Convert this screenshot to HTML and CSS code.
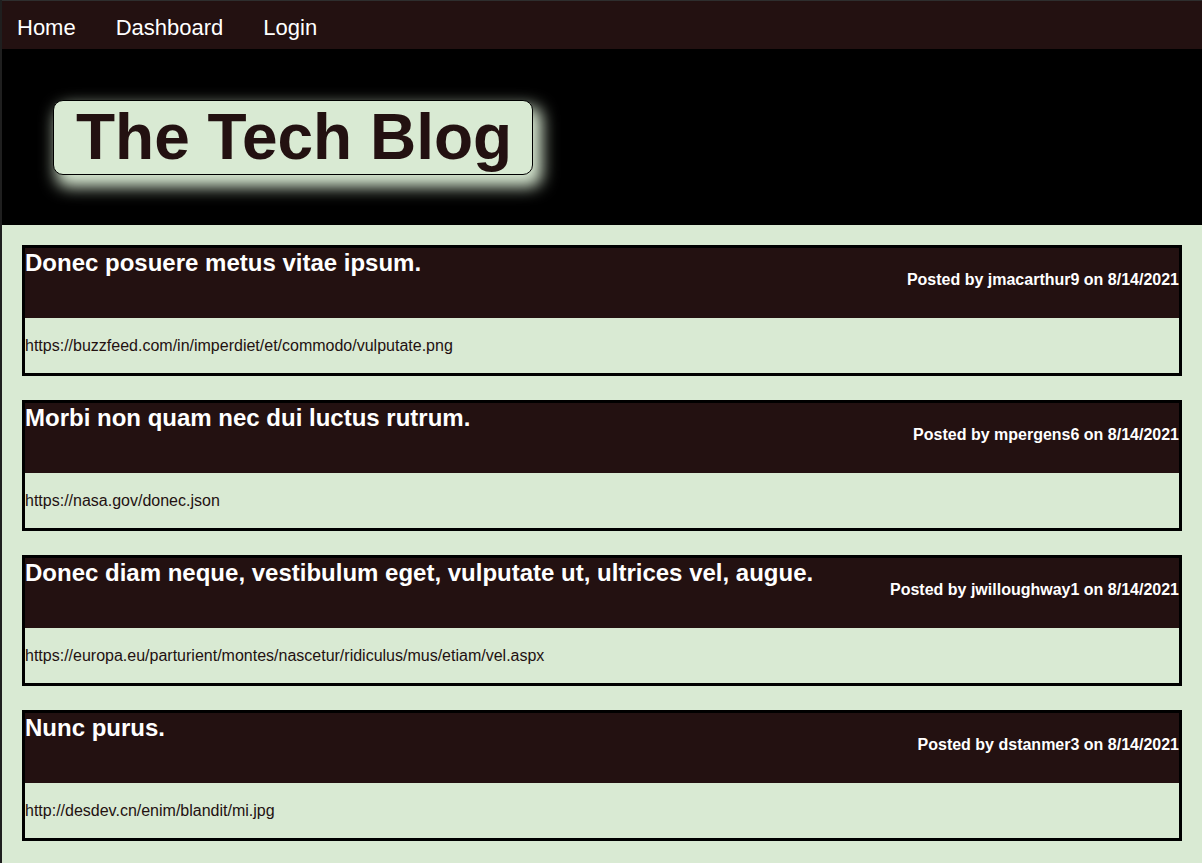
FILE: index.html
```html
<!DOCTYPE html>
<html>
<head>
<meta charset="utf-8">
<title>The Tech Blog</title>
<link rel="stylesheet" href="styles.css">
</head>
<body>
<nav class="nav">
  <a class="nav-link" href="#">Home</a>
  <a class="nav-link" href="#">Dashboard</a>
  <a class="nav-link" href="#">Login</a>
</nav>
<header class="hero">
  <h1 class="hero-title">The Tech Blog</h1>
</header>
<main class="posts">
  <article class="post">
    <div class="post-head">
      <h2 class="post-title">Donec posuere metus vitae ipsum.</h2>
      <p class="post-meta">Posted by jmacarthur9 on 8/14/2021</p>
    </div>
    <div class="post-body"><p class="post-text">https://buzzfeed.com/in/imperdiet/et/commodo/vulputate.png</p></div>
  </article>
  <article class="post">
    <div class="post-head">
      <h2 class="post-title">Morbi non quam nec dui luctus rutrum.</h2>
      <p class="post-meta">Posted by mpergens6 on 8/14/2021</p>
    </div>
    <div class="post-body"><p class="post-text">https://nasa.gov/donec.json</p></div>
  </article>
  <article class="post">
    <div class="post-head">
      <h2 class="post-title">Donec diam neque, vestibulum eget, vulputate ut, ultrices vel, augue.</h2>
      <p class="post-meta">Posted by jwilloughway1 on 8/14/2021</p>
    </div>
    <div class="post-body"><p class="post-text">https://europa.eu/parturient/montes/nascetur/ridiculus/mus/etiam/vel.aspx</p></div>
  </article>
  <article class="post">
    <div class="post-head">
      <h2 class="post-title">Nunc purus.</h2>
      <p class="post-meta">Posted by dstanmer3 on 8/14/2021</p>
    </div>
    <div class="post-body"><p class="post-text">http://desdev.cn/enim/blandit/mi.jpg</p></div>
  </article>
</main>
</body>
</html>
```

FILE: styles.css
```css
html {
  background: #ffffff;
}
body {
  margin: 0 1px 0 0;
  border-left: 2px solid #1f1f1f;
  font-family: "Liberation Sans", Arial, sans-serif;
  background: #d9ead3;
  min-height: 863px;
}
.nav {
  display: flex;
  gap: 40px;
  background: #231111;
  border-top: 1px solid #2e2e2e;
  padding: 14px 15px 9px;
  height: 25px;
}
.nav-link {
  color: #ffffff;
  text-decoration: none;
  font-size: 22px;
  line-height: 25px;
}
.hero {
  background: #000000;
  padding: 51px 0 50px 51px;
}
.hero-title {
  display: inline-block;
  margin: 0;
  padding: 0 20px 0 22px;
  font-size: 64px;
  line-height: 73px;
  font-weight: bold;
  color: #231111;
  background: #d9ead3;
  border: 1px solid #000000;
  border-radius: 10px;
  box-shadow: 6px 9px 16px 3px #d9ead3;
}
.posts {
  display: flex;
  flex-direction: column;
  gap: 24px;
  padding: 20px 20px 22px;
}
.post {
  border: 3px solid #000000;
}
.post-head {
  display: flex;
  justify-content: space-between;
  align-items: flex-start;
  background: #231111;
  color: #ffffff;
  height: 70px;
}
.post-title {
  margin: 1px 0 0;
  font-size: 24px;
  line-height: 28px;
  font-weight: bold;
}
.post-meta {
  margin: 23px 0 0;
  font-size: 16px;
  line-height: 18px;
  font-weight: bold;
  text-align: right;
  white-space: nowrap;
}
.post-body {
  height: 55px;
  padding: 0;
}
.post-text {
  margin: 0;
  padding-top: 18px;
  font-size: 16px;
  line-height: 19px;
  color: #231111;
}
```
